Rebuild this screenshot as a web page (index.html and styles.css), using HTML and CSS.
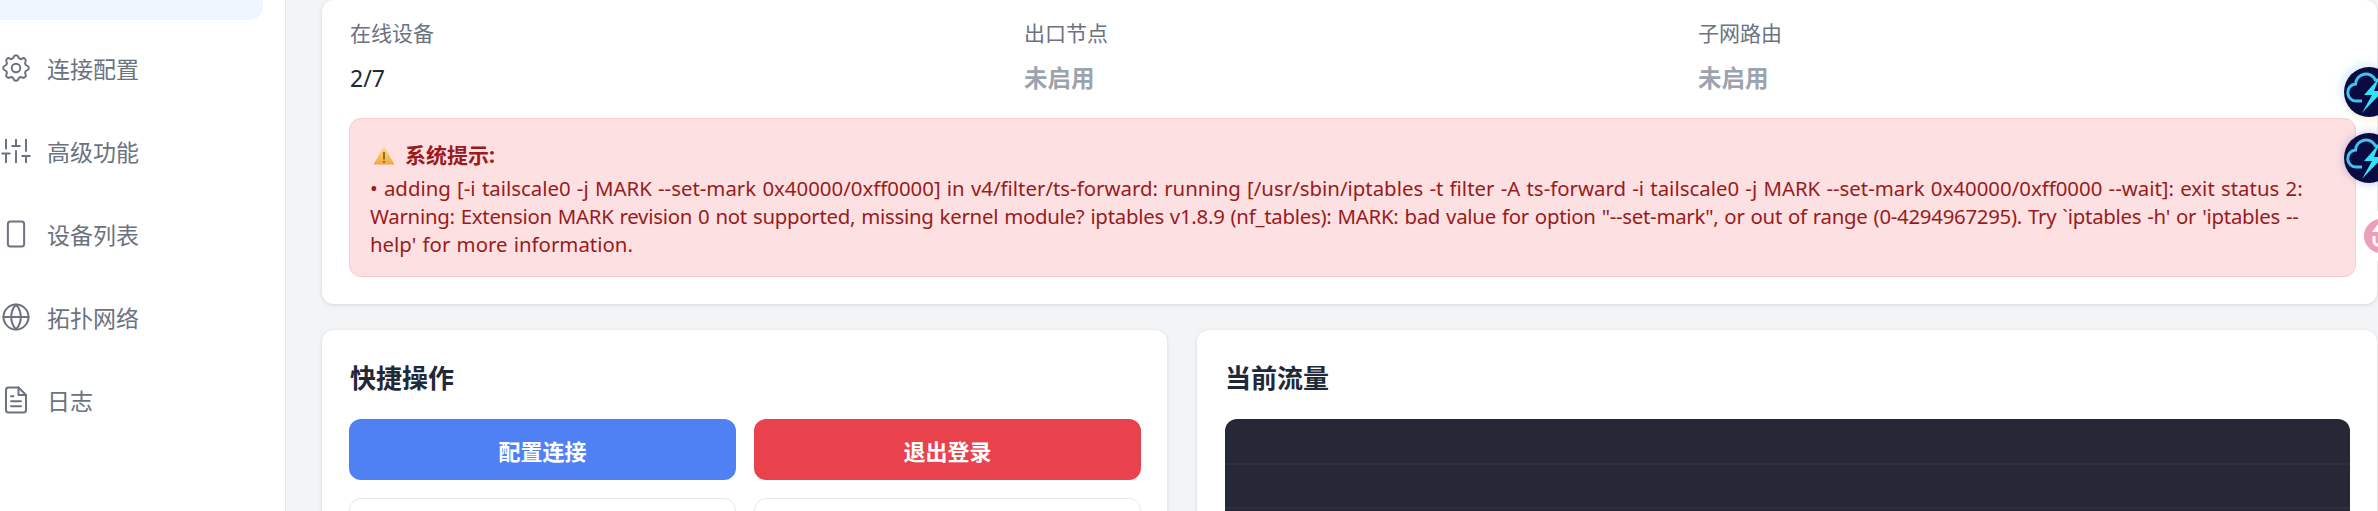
FILE: index.html
```html
<!DOCTYPE html>
<html lang="zh-CN">
<head>
    <meta charset="UTF-8">
    <meta name="viewport" content="width=device-width, initial-scale=1.0">
    <title>Tailscale</title>
    <link rel="stylesheet" href="styles.css">
</head>
<body>
    <div class="sidebar">
        <a class="nav-item active"></a>
        <a class="nav-item">
            <svg class="nav-icon gear" viewBox="1.500 1.500 21 21"><path d="M10.325 4.317c.426-1.756 2.924-1.756 3.35 0a1.724 1.724 0 002.573 1.066c1.543-.94 3.31.826 2.37 2.37a1.724 1.724 0 001.065 2.572c1.756.426 1.756 2.924 0 3.35a1.724 1.724 0 00-1.066 2.573c.94 1.543-.826 3.31-2.37 2.37a1.724 1.724 0 00-2.572 1.065c-.426 1.756-2.924 1.756-3.35 0a1.724 1.724 0 00-2.573-1.066c-1.543.94-3.31-.826-2.37-2.37a1.724 1.724 0 00-1.065-2.572c-1.756-.426-1.756-2.924 0-3.35a1.724 1.724 0 001.066-2.573c-.94-1.543.826-3.31 2.37-2.37.996.608 2.296.07 2.572-1.065z"/><circle cx="12" cy="12" r="3"/></svg>
            连接配置
        </a>
        <a class="nav-item">
            <svg class="nav-icon" viewBox="0 0 24 24"><path d="M4 21v-7M4 10V3M12 21v-9M12 8V3M20 21v-5M20 12V3M1 14h6M9 8h6M17 16h6"/></svg>
            高级功能
        </a>
        <a class="nav-item">
            <svg class="nav-icon" viewBox="0 0 24 24"><rect x="5.500" y="2" width="13" height="20" rx="2"/></svg>
            设备列表
        </a>
        <a class="nav-item">
            <svg class="nav-icon" viewBox="0 0 24 24"><circle cx="12" cy="12" r="10"/><path d="M2 12h20M12 2a15 15 0 010 20 15 15 0 010-20z"/></svg>
            拓扑网络
        </a>
        <a class="nav-item">
            <svg class="nav-icon" viewBox="0 0 24 24"><path d="M14 2H6a2 2 0 00-2 2v16a2 2 0 002 2h12a2 2 0 002-2V8z"/><path d="M14 2v6h6M16 13H8M16 17H8M10 9H8"/></svg>
            日志
        </a>
    </div>

    <div class="content">
        <div class="card status-card">
            <div class="stats">
                <div>
                    <div class="stat-label">在线设备</div>
                    <div class="stat-value">2/7</div>
                </div>
                <div>
                    <div class="stat-label">出口节点</div>
                    <div class="stat-value off">未启用</div>
                </div>
                <div>
                    <div class="stat-label">子网路由</div>
                    <div class="stat-value off">未启用</div>
                </div>
            </div>
            <div class="alert">
                <div class="alert-title">
                    <svg class="warn-icon" viewBox="0 0 22 20">
                        <defs><linearGradient id="warnFill" x1="0" y1="0" x2="0" y2="1"><stop offset="0" stop-color="#fbe08a"/><stop offset="1" stop-color="#f5a53d"/></linearGradient></defs>
                        <path d="M11 1L21.500 19.500H.5z" fill="url(#warnFill)"/>
                        <path d="M11 7v7.500M11 16v1.800" stroke="#5b4a2c" stroke-width="1.400" fill="none"/>
                    </svg>
                    系统提示:
                </div>
                <div class="alert-text">• adding [-i tailscale0 -j MARK --set-mark 0x40000/0xff0000] in v4/filter/ts-forward: running [/usr/sbin/iptables -t filter -A ts-forward -i tailscale0 -j MARK --set-mark 0x40000/0xff0000 --wait]: exit status 2: <span class="tight">Warning: Extension MARK revision 0 not supported, missing kernel module? iptables v1.8.9 (nf_tables): MARK: bad value for option "--set-mark", or out of range (0-4294967295). Try `iptables -h' or 'iptables --</span>help' for more information.</div>
            </div>
        </div>

        <div class="bottom-row">
            <div class="card panel panel-left">
                <h3>快捷操作</h3>
                <div class="actions">
                    <button class="btn btn-blue">配置连接</button>
                    <button class="btn btn-red">退出登录</button>
                    <button class="btn btn-plain"></button>
                    <button class="btn btn-plain"></button>
                </div>
            </div>
            <div class="card panel">
                <h3>当前流量</h3>
                <div class="chart">
                    <div class="chart-line"></div>
                    <div class="chart-line"></div>
                </div>
            </div>
        </div>
    </div>

    <div class="float-btn bolt first">
        <svg viewBox="0 0 50 50"><path d="M18 34h-5a8.500 8.500 0 01-1.500-17 10.500 10.500 0 0120-4 9 9 0 018 3" fill="none" stroke="#3fc4ee" stroke-width="3"/><path d="M35 11L20 28h8l-10 18 21-22h-9z" fill="#35e0fa"/></svg>
    </div>
    <div class="float-btn bolt second">
        <svg viewBox="0 0 50 50"><path d="M18 34h-5a8.500 8.500 0 01-1.500-17 10.500 10.500 0 0120-4 9 9 0 018 3" fill="none" stroke="#3fc4ee" stroke-width="3"/><path d="M35 11L20 28h8l-10 18 21-22h-9z" fill="#35e0fa"/></svg>
    </div>
    <div class="float-btn pink">
        <svg viewBox="0 0 34 34"><path d="M14 5L8 13h6z" fill="#fff"/><path d="M10 17v5a4 4 0 008 0" fill="none" stroke="#fff" stroke-width="3"/></svg>
    </div>
</body>
</html>
```

FILE: styles.css
```css
html, body {
    height: 511px;
    overflow: hidden;
}
body {
    font-family: "Noto Sans", "Noto Sans CJK SC", sans-serif;
    margin: 0;
    display: flex;
    background-color: #f3f4f6;
    color: #1f2937;
}
.sidebar {
    width: 285px;
    flex-shrink: 0;
    height: 511px;
    overflow: hidden;
    background-color: #fff;
    border-right: 1px solid #e5e7eb;
}
.nav-item {
    width: 263px;
    height: 71px;
    margin-bottom: 12px;
    padding-left: 1px;
    box-sizing: border-box;
    display: flex;
    align-items: center;
    gap: 16px;
    font-size: 23px;
    color: #6b7280;
}
.nav-item.active {
    margin-top: -51px;
    background-color: #eff6ff;
    border-radius: 0 0 14px 0;
}
.nav-icon {
    width: 30px;
    height: 30px;
    flex-shrink: 0;
    fill: none;
    stroke: #6b7280;
    stroke-width: 1.600;
    stroke-linecap: round;
    stroke-linejoin: round;
}
.nav-icon.gear {
    stroke-width: 1.400;
}
.content {
    flex-grow: 1;
    min-width: 0;
    padding-left: 36px;
    padding-right: 1px;
}
.card {
    background-color: #fff;
    border-radius: 12px;
    box-shadow: 0 1px 4px rgba(0, 0, 0, 0.12);
    box-sizing: border-box;
}
.status-card {
    height: 304px;
    padding: 18px 21px 0 27px;
}
.stats {
    display: grid;
    padding-left: 1px;
    grid-template-columns: repeat(3, 674px);
}
.stat-label {
    font-size: 21px;
    line-height: 30px;
    color: #6b7280;
}
.stat-value {
    margin-top: 15px;
    font-size: 23px;
    line-height: 30px;
    color: #1f2937;
}
.stat-value.off {
    font-size: 23.500px;
    font-weight: 700;
    color: #9ca3af;
}
.alert {
    margin-top: 25px;
    height: 159px;
    padding: 21px 19px 0 20px;
    box-sizing: border-box;
    background-color: #fde0e2;
    border: 1px solid #fbc9cc;
    border-radius: 12px;
    color: #991b1b;
}
.alert-title {
    display: flex;
    align-items: center;
    gap: 10px;
    margin-bottom: 4px;
    font-size: 21px;
    line-height: 30px;
    font-weight: 700;
}
.warn-icon {
    width: 22px;
    height: 20px;
    margin-left: 3px;
}
.alert-text {
    font-size: 20.400px;
    word-spacing: 0.950px;
    line-height: 28px;
}
.tight {
    letter-spacing: -0.270px;
}
.bottom-row {
    margin-top: 26px;
    display: grid;
    grid-template-columns: 845px 1fr;
    gap: 30px;
}
.panel {
    height: 300px;
    padding: 28px 27px 28px 28px;
}
.panel-left {
    padding-left: 27px;
    padding-right: 26px;
}
.panel-left h3 {
    padding-left: 1px;
}
.panel h3 {
    margin: 0;
    height: 61px;
    font-size: 26px;
    line-height: 40px;
    font-weight: 600;
    color: #1f2937;
}
.actions {
    display: grid;
    grid-template-columns: 1fr 1fr;
    gap: 18px;
}
.btn {
    height: 61px;
    border: none;
    border-radius: 12px;
    font-family: inherit;
    font-size: 22px;
    font-weight: 700;
    color: #fff;
}
.btn-blue {
    background-color: #4f81f5;
}
.btn-red {
    background-color: #e9424c;
}
.btn-plain {
    background-color: #fff;
    border: 1px solid #e5e7eb;
}
.chart {
    height: 240px;
    padding-top: 44px;
    background-color: #262836;
    border-radius: 12px;
}
.chart-line {
    height: 2px;
    margin-bottom: 42px;
    background-color: #2e2f44;
}
.float-btn {
    position: fixed;
    border-radius: 50%;
}
.float-btn.bolt {
    left: 2344px;
    width: 50px;
    height: 50px;
    background-color: #0b0b42;
}
.float-btn.first {
    top: 67px;
    box-shadow: -3px -3px 8px rgba(150, 210, 240, 0.4), 3px 4px 8px rgba(240, 230, 170, 0.4);
}
.float-btn.second {
    top: 133px;
    box-shadow: 0 0 10px rgba(110, 120, 190, 0.45);
}
.float-btn.pink {
    top: 219px;
    left: 2364px;
    width: 34px;
    height: 34px;
    background-color: #ee9fb8;
    box-shadow: 0 0 0 8px #fff;
}
.float-btn svg {
    display: block;
    width: 100%;
    height: 100%;
}
```
